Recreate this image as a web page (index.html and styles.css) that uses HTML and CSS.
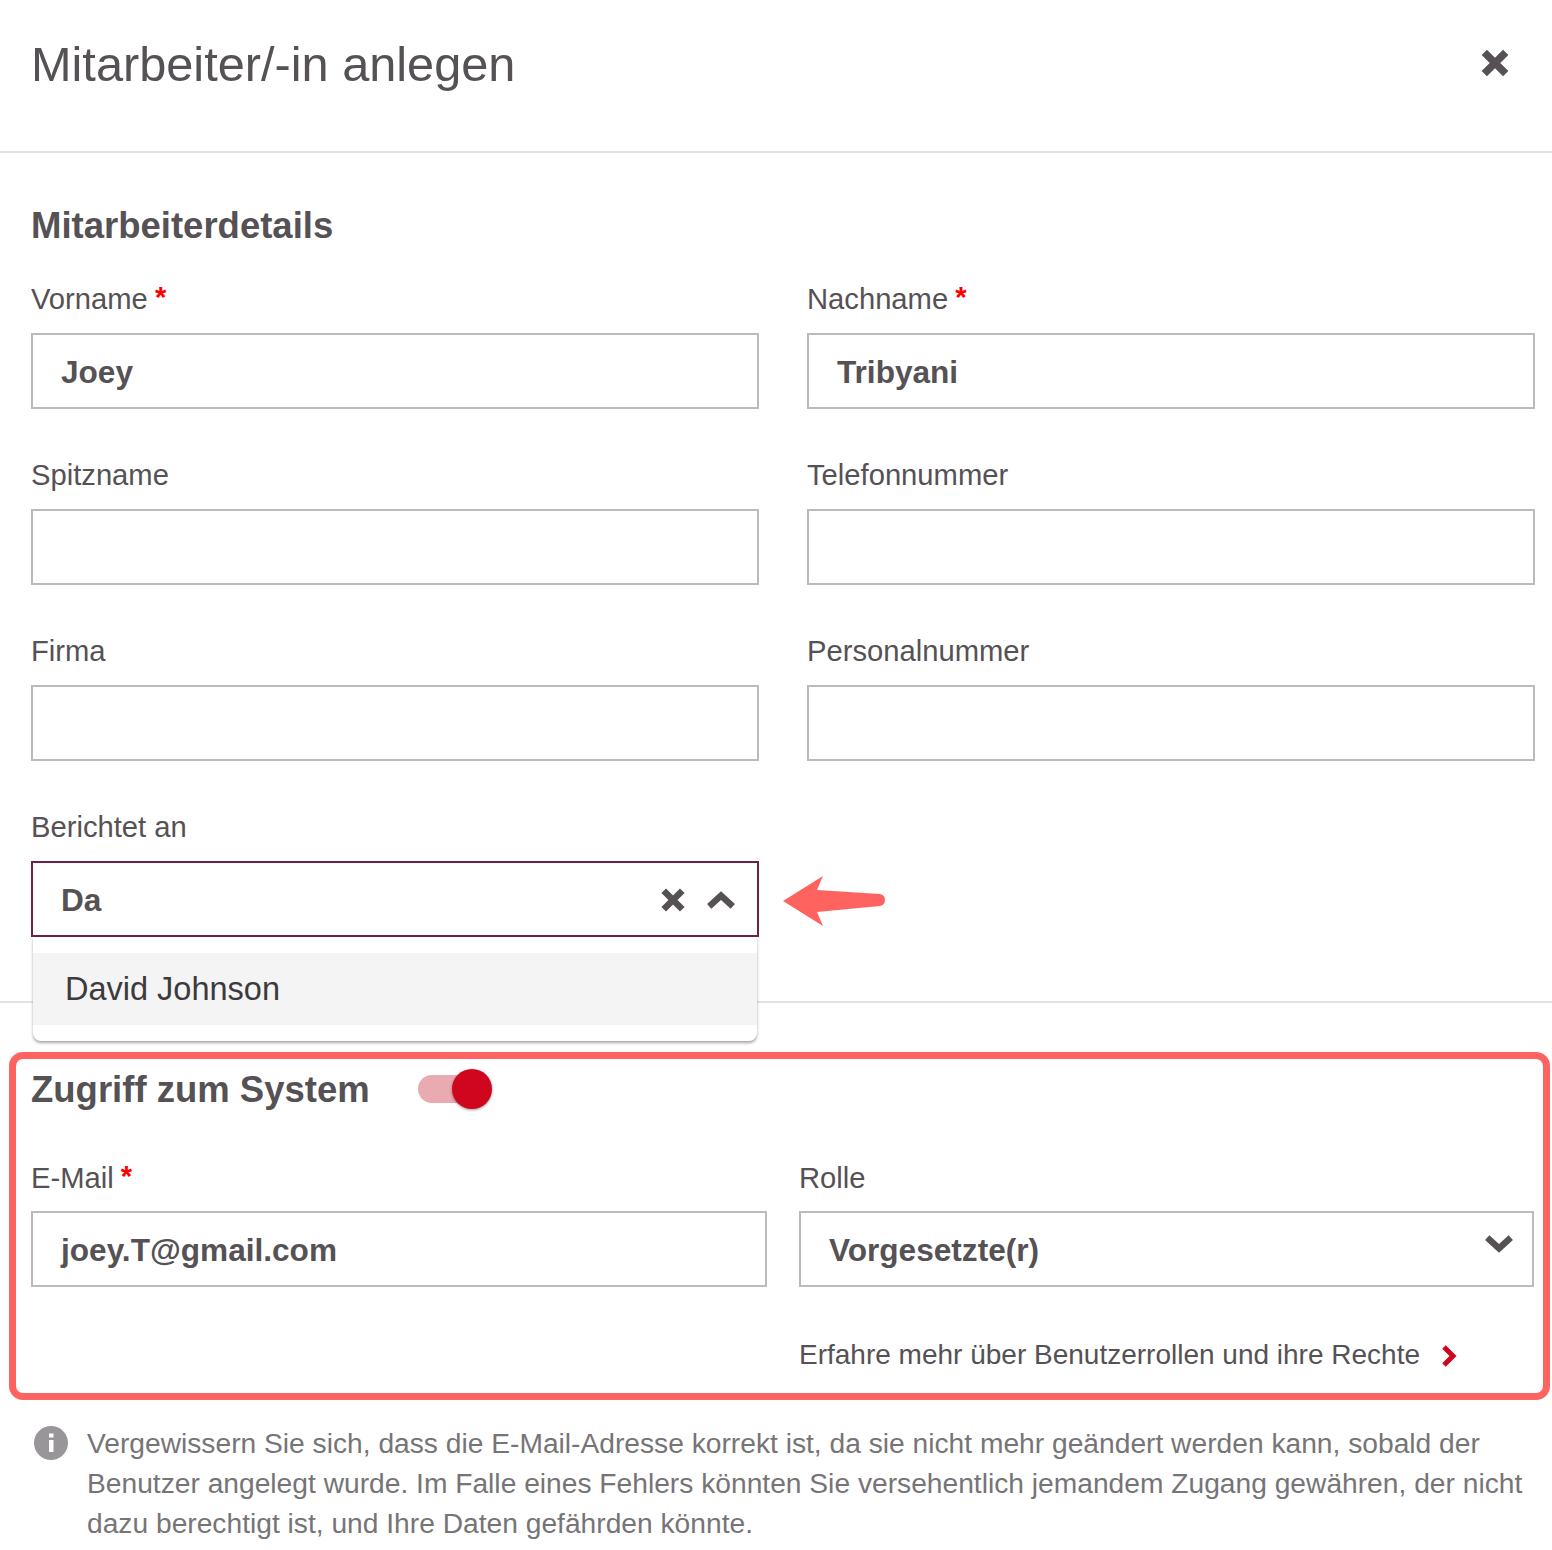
FILE: index.html
```html
<!DOCTYPE html>
<html lang="de">
<head>
  <meta charset="UTF-8">
  <title>Mitarbeiter/-in anlegen</title>
  <link rel="stylesheet" href="styles.css">
</head>
<body>
  <header class="modal-head">
    <h1>Mitarbeiter/-in anlegen</h1>
    <svg class="icon-close" viewBox="0 0 28 28"><path d="M4 4 24 24M24 4 4 24"/></svg>
  </header>

  <section class="details">
    <h2>Mitarbeiterdetails</h2>
    <div class="field-grid">
      <div class="field">
        <div class="label">Vorname <span class="req">*</span></div>
        <div class="input">Joey</div>
      </div>
      <div class="field">
        <div class="label">Nachname <span class="req">*</span></div>
        <div class="input">Tribyani</div>
      </div>
      <div class="field">
        <div class="label">Spitzname</div>
        <div class="input"></div>
      </div>
      <div class="field">
        <div class="label">Telefonnummer</div>
        <div class="input"></div>
      </div>
      <div class="field">
        <div class="label">Firma</div>
        <div class="input"></div>
      </div>
      <div class="field">
        <div class="label">Personalnummer</div>
        <div class="input"></div>
      </div>
      <div class="field combo">
        <div class="label">Berichtet an</div>
        <div class="input input-focus">
          <span class="grow">Da</span>
          <svg class="icon-clear" viewBox="0 0 28 28"><path d="M4 4 24 24M24 4 4 24"/></svg>
          <svg class="icon-chevron" viewBox="0 0 28 18"><path d="M3 15 14 5 25 15"/></svg>
        </div>
        <div class="menu">
          <div class="menu-item">David Johnson</div>
        </div>
        <svg class="arrow" viewBox="0 0 102 50"><path d="M0 25 40 0 34 14 97 18Q102 19 102 24T97 30L34 36 40 50Z"/></svg>
      </div>
    </div>
  </section>

  <section class="access">
    <div class="access-head">
      <h2>Zugriff zum System</h2>
      <div class="toggle"><span class="knob"></span></div>
    </div>
    <div class="access-grid">
      <div class="field">
        <div class="label">E-Mail <span class="req">*</span></div>
        <div class="input">joey.T@gmail.com</div>
      </div>
      <div class="field">
        <div class="label">Rolle</div>
        <div class="input">
          <span class="grow">Vorgesetzte(r)</span>
          <svg class="icon-down" viewBox="0 0 28 18"><path d="M3 3 14 13 25 3"/></svg>
        </div>
        <div class="role-link">
          Erfahre mehr über Benutzerrollen und ihre Rechte
          <svg class="icon-next" viewBox="0 0 16 24"><path d="M3 3 12 12 3 21"/></svg>
        </div>
      </div>
    </div>
  </section>

  <div class="note">
    <svg class="icon-info" viewBox="0 0 34 34">
      <circle cx="17" cy="17" r="17"/>
      <rect x="15" y="14" width="4.5" height="12" fill="#fff"/>
      <rect x="15" y="7.5" width="4.5" height="4" fill="#fff"/>
    </svg>
    <p>Vergewissern Sie sich, dass die E-Mail-Adresse korrekt ist, da sie nicht mehr geändert werden kann, sobald der Benutzer angelegt wurde. Im Falle eines Fehlers könnten Sie versehentlich jemandem Zugang gewähren, der nicht dazu berechtigt ist, und Ihre Daten gefährden könnte.</p>
  </div>
</body>
</html>
```

FILE: styles.css
```css
body {
  margin: 0;
  background: #fff;
  color: #555155;
  font-family: "Liberation Sans", Arial, sans-serif;
  font-size: 29.2px;
}

.modal-head {
  height: 151px;
  padding: 0 42px 0 31px;
  border-bottom: 2px solid #e2e2e2;
  display: flex;
  justify-content: space-between;
}

h1 {
  margin: 36px 0 0;
  font-size: 48.7px;
  line-height: 56px;
  font-weight: normal;
}

.icon-close {
  width: 30px;
  height: 30px;
  margin-top: 48px;
  fill: none;
  stroke: #555155;
  stroke-width: 7;
}

h2 {
  margin: 0;
  font-size: 36.5px;
  line-height: 44px;
  font-weight: bold;
}

.details {
  height: 850px;
  padding: 51px 17px 0 31px;
  box-sizing: border-box;
  border-bottom: 2px solid #e2e2e2;
}

.field-grid {
  margin-top: 34px;
  display: grid;
  grid-template-columns: 1fr 1fr;
  column-gap: 48px;
  row-gap: 49px;
}

.label {
  height: 34px;
  margin-bottom: 17px;
  line-height: 34px;
}

.req {
  color: #f00;
  font-weight: bold;
  margin-left: -1px;
  position: relative;
  top: -2px;
}

.input {
  height: 76px;
  padding: 2px 21px 0 28px;
  box-sizing: border-box;
  border: 2px solid #bbb;
  display: flex;
  align-items: center;
  font-size: 31.6px;
  font-weight: bold;
}

.grow {
  flex: 1;
}

.combo {
  position: relative;
}

.input-focus {
  border-color: #6e2146;
}

.icon-clear {
  width: 26px;
  height: 26px;
  fill: none;
  stroke: #555155;
  stroke-width: 7;
}

.icon-chevron {
  width: 30px;
  height: 20px;
  margin-left: 20px;
  fill: none;
  stroke: #555155;
  stroke-width: 6;
}

.menu {
  position: absolute;
  left: 2px;
  right: 2px;
  top: 127px;
  padding: 16px 0;
  background: #fff;
  border-radius: 0 0 8px 8px;
  box-shadow: 0 2px 3px rgba(0, 0, 0, 0.35);
}

.menu-item {
  height: 72px;
  padding-left: 32px;
  background: #f4f4f4;
  display: flex;
  align-items: center;
  color: #3d3a3d;
  font-size: 32.5px;
}

.arrow {
  position: absolute;
  left: calc(100% + 24px);
  top: 66px;
  width: 102px;
  height: 50px;
  fill: #ff6360;
}

.access {
  height: 348px;
  margin: 49px 2px 0 9px;
  padding: 9px 9px 0 15px;
  box-sizing: border-box;
  border: 7px solid #ff6360;
  border-radius: 14px;
}

.access-head {
  display: flex;
  align-items: center;
  gap: 48px;
}

.toggle {
  width: 64px;
  height: 28px;
  margin-top: -2px;
  background: #e9abb1;
  border-radius: 14px;
  position: relative;
}

.knob {
  position: absolute;
  right: -10px;
  top: -6px;
  width: 40px;
  height: 40px;
  border-radius: 50%;
  background: #d0061f;
  box-shadow: 0 1px 3px rgba(0, 0, 0, 0.4);
}

.access-grid {
  margin-top: 49px;
  display: grid;
  grid-template-columns: 736px 735px;
  column-gap: 32px;
}

.access-grid .label {
  margin-bottom: 16px;
}

.icon-down {
  width: 30px;
  height: 20px;
  margin: -12px -3px 0 0;
  fill: none;
  stroke: #555155;
  stroke-width: 6;
}

.role-link {
  margin-top: 49px;
  line-height: 38px;
  font-size: 28px;
}

.icon-next {
  width: 16px;
  height: 24px;
  margin-left: 13px;
  vertical-align: -4px;
  fill: none;
  stroke: #d0061f;
  stroke-width: 5;
}

.note {
  margin-top: 23px;
  padding: 0 17px 0 34px;
  display: flex;
  gap: 19px;
  color: #777477;
}

.icon-info {
  flex: none;
  width: 34px;
  height: 34px;
  margin-top: 3px;
  fill: #99969a;
}

.note p {
  margin: 0;
  font-size: 28.2px;
  line-height: 40px;
}
```
